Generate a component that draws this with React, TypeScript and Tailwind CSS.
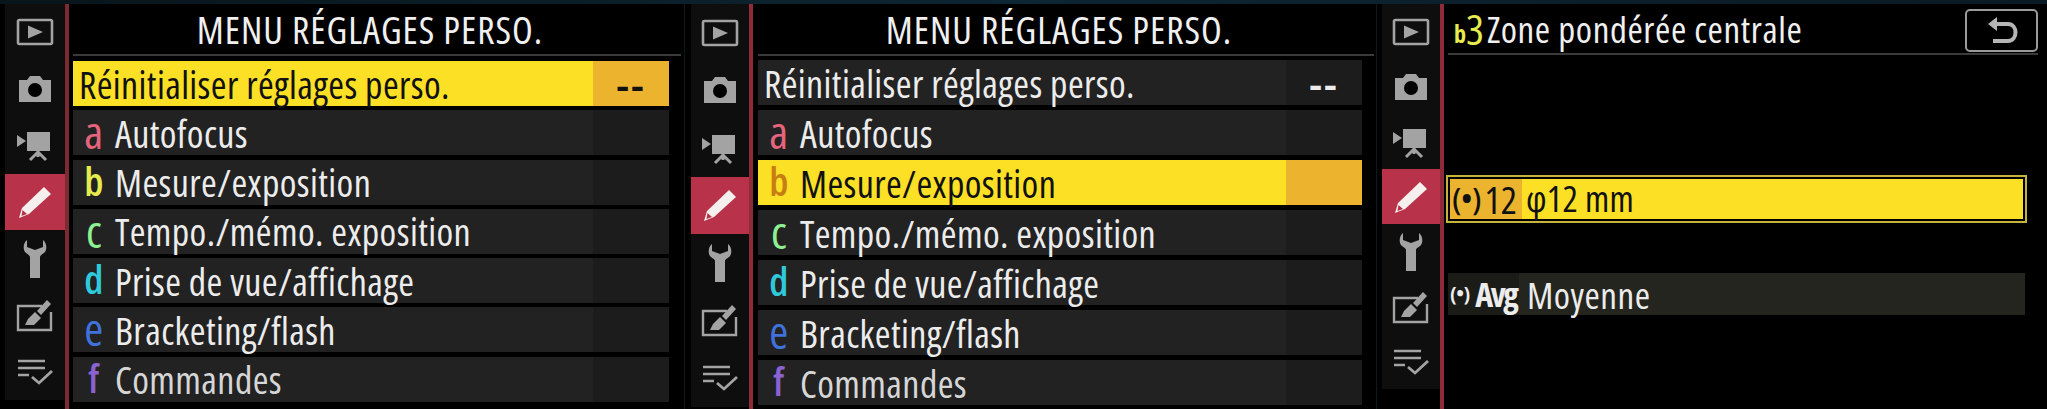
import type { ReactNode } from "react";

const ICON = "#a3a3a3";

// Sidebar glyphs, all drawn on the same 40x40 box
const PlayIcon = () => (
    <svg width="40" height="40" viewBox="0 0 40 40">
        <rect x="3" y="8" width="34" height="24" rx="1.5" fill="none" stroke={ICON} strokeWidth="2.6" />
        <path d="M13 13.5 L28 20 L13 26.5 Z" fill={ICON} />
    </svg>
);

const CameraIcon = () => (
    <svg width="40" height="40" viewBox="0 0 40 40">
        <path d="M4 11 H12 L15 7 H25 L28 11 H36 V33 H4 Z" fill={ICON} />
        <circle cx="20" cy="21" r="7" fill="#000" />
    </svg>
);

const VideoIcon = () => (
    <svg width="40" height="40" viewBox="0 0 40 40">
        <path d="M2 10 L11 16 L2 22 Z" fill={ICON} />
        <rect x="12" y="7" width="23" height="19" fill={ICON} />
        <path d="M23 25 V32 M23 27 L15 35 M23 27 L31 35" stroke={ICON} strokeWidth="3" fill="none" />
    </svg>
);

const PencilIcon = () => (
    <svg width="40" height="40" viewBox="0 0 40 40">
        <path d="M29 5 L36 12 L14 32 L4 36 L7 26 Z" fill="#f5f0ee" />
        <path d="M7.5 28 L12 32 L6.5 34 Z" fill="#b8334a" />
    </svg>
);

const WrenchIcon = () => (
    <svg width="40" height="40" viewBox="0 0 40 40">
        <path d="M12 1 C8 4 8 10 10 13 C11.500 15 15 16 15 18 V39 H25 V18 C25 16 28.500 15 30 13 C32 10 32 4 28 1 V8 L20 11 L12 8 Z" fill={ICON} />
    </svg>
);

const RetouchIcon = () => (
    <svg width="40" height="40" viewBox="0 0 40 40">
        <path d="M27 11 H3 V35 H36 V17" fill="none" stroke={ICON} strokeWidth="2.4" />
        <path d="M13 24 L20 17 L26 23 L19 30 L10 30 Z" fill={ICON} />
        <path d="M22 16 L32 5 L36 9 L26 20 Z" fill={ICON} />
    </svg>
);

const MyMenuIcon = () => (
    <svg width="40" height="40" viewBox="0 0 40 40">
        <path d="M3 9 H30 M3 16 H30 M3 23 H14" stroke={ICON} strokeWidth="2.6" fill="none" />
        <path d="M17 25 L24 31 L37 19" stroke={ICON} strokeWidth="2.8" fill="none" />
    </svg>
);

const BackIcon = () => (
    <svg width="34" height="32" viewBox="0 0 34 32">
        <path d="M3 9 L12 2 V16 Z" fill="#b5b5b5" />
        <path d="M10 9 H23 C33 9 33 26 23 26 H8" fill="none" stroke="#b5b5b5" strokeWidth="4" />
    </svg>
);

const sideIcons = [PlayIcon, CameraIcon, VideoIcon, PencilIcon, WrenchIcon, RetouchIcon, MyMenuIcon];

function Sidebar({ itemClass, className }: { itemClass: string; className: string }) {
    return (
        <div className={`flex flex-col shrink-0 ${className}`}>
            {sideIcons.map((Icon, i) => (
                <div
                    key={i}
                    className={`flex items-center justify-center ${itemClass} ${i === 3 ? "bg-[#b8334a]" : "bg-[#0e0e0e]"}`}
                >
                    <Icon />
                </div>
            ))}
        </div>
    );
}

const TEXT = "font-['Open_Sans','Noto_Sans',sans-serif] [font-stretch:75%] leading-none whitespace-nowrap";

const menuItems = [
    { letter: "a", color: "text-[#e7657c]", size: "text-[46px]", label: "Autofocus" },
    { letter: "b", color: "text-[#e6ec4e]", size: "text-[40px] font-semibold", label: "Mesure/exposition" },
    { letter: "c", color: "text-[#8ef091]", size: "text-[46px]", label: "Tempo./mémo. exposition" },
    { letter: "d", color: "text-[#2fc9dc]", size: "text-[40px] font-semibold", label: "Prise de vue/affichage" },
    { letter: "e", color: "text-[#3f72dc]", size: "text-[46px]", label: "Bracketing/flash" },
    { letter: "f", color: "text-[#8b62d2]", size: "text-[40px] font-semibold", label: "Commandes" },
];

function Row({ active, children, right }: { active: boolean; children: ReactNode; right?: ReactNode }) {
    return (
        <div className={`flex h-[45px] items-center ${active ? "bg-[#fbe026] text-[#111]" : "bg-[#222222] text-[#ececec]"}`}>
            <div className={`flex-1 flex items-center h-full text-[38px] tracking-[0.4px] ${TEXT}`}>{children}</div>
            <div
                className={`w-[76px] h-full flex items-center justify-center text-[44px] font-semibold tracking-[2px] ${TEXT} ${active ? "bg-[#ecb42e]" : "bg-[#1c1c1c]"}`}
            >
                {right}
            </div>
        </div>
    );
}

function MenuList({ selected, gapClass }: { selected: number; gapClass: string }) {
    return (
        <div className={`flex flex-col ${gapClass}`}>
            <Row active={selected === 0} right="--">
                <span className="pl-[6px]">Réinitialiser réglages perso.</span>
            </Row>
            {menuItems.map((item, i) => (
                <Row key={item.letter} active={selected === i + 1}>
                    <span
                        className={`w-[42px] h-[42px] mb-[3px] leading-[42px] text-center ${item.size} ${selected === i + 1 ? "text-[#c87d12]" : item.color}`}
                    >
                        {item.letter}
                    </span>
                    <span className={i === 5 ? "text-[#d6d6d6]" : ""}>{item.label}</span>
                </Row>
            ))}
        </div>
    );
}

function Header({ children }: { children: ReactNode }) {
    return (
        <div className="h-[52px] border-b-2 border-[#3a3a3a] flex items-center justify-center pr-[14px] text-[38px] tracking-[1px] text-[#f0f0f0]">
            <span className={TEXT}>{children}</span>
        </div>
    );
}

export default function App() {
    return (
        <div className="w-[2047px] h-[409px] bg-[#050a0c] overflow-hidden flex flex-col">
            <div className="h-[4px] shrink-0 bg-gradient-to-r from-[#08151b] via-[#0d2633] to-[#0a1a24]" />
            <div className="flex flex-1">
                {/* Left panel */}
                <div className="w-[684px] flex pl-[5px] bg-black">
                    <Sidebar itemClass="h-[56.6px] w-[60px]" className="border-r-4 border-[#7d2a32]" />
                    <div className="ml-[4px] w-[608px]">
                        <Header>MENU RÉGLAGES PERSO.</Header>
                        <div className="w-[596px] mt-[5px]">
                            <MenuList selected={0} gapClass="gap-[4.3px]" />
                        </div>
                    </div>
                </div>

                {/* Middle panel */}
                <div className="w-[692px] flex pl-[6px] border-l border-[#0c1a20] bg-black">
                    <Sidebar itemClass="h-[57.5px] w-[58px]" className="border-r-4 border-[#8f2a3a]" />
                    <div className="ml-[5px] w-[616px]">
                        <Header>MENU RÉGLAGES PERSO.</Header>
                        <div className="w-[604px] mt-[4px]">
                            <MenuList selected={2} gapClass="gap-[5px]" />
                        </div>
                    </div>
                </div>

                {/* Right panel */}
                <div className="w-[671px] flex pl-[5px] border-l border-[#0c1a20] bg-black">
                    <Sidebar itemClass="h-[55px] w-[58px]" className="border-r-4 border-[#8f2a3a]" />
                    <div className="ml-[4px] w-[590px]">
                        <div className="h-[51px] border-b-2 border-[#3a3a3a] flex items-center relative">
                            <span className={`pl-[6px] text-[#e6ec4e] text-[24px] font-bold pt-[10px] ${TEXT}`}>b</span>
                            <span className={`text-[#e6ec4e] text-[42px] pr-[3px] ${TEXT}`}>3</span>
                            <span className={`text-[37px] tracking-[0.6px] text-[#f0f0f0] ${TEXT}`}>Zone pondérée centrale</span>
                            <div className="absolute right-0 top-[5px] w-[73px] h-[43px] border-2 border-[#9a9a9a] rounded-[5px] flex items-center justify-center">
                                <BackIcon />
                            </div>
                        </div>
                        <div className="mt-[120px] -ml-[2px] w-[581px] h-[48px] border-2 border-[#c4b53a] p-[2px] bg-black">
                            <div className="h-full flex items-center bg-[#fbe026] text-[#111] text-[36px]">
                                <span className={`w-[72px] h-full flex items-center pl-[2px] bg-[#ecb42e] text-[38px] ${TEXT}`}>
                                    <span className="text-[30px] font-semibold pr-[3px]">(•)</span>12
                                </span>
                                <span className={`pl-[4px] tracking-[0.3px] ${TEXT}`}>φ12 mm</span>
                            </div>
                        </div>
                        <div className="mt-[50px] w-[577px] h-[42px] flex items-center bg-[#25251f] text-[#ececec] text-[37px]">
                            <span className={`w-[71px] h-full flex items-center pl-[2px] bg-[#1b1b18] font-bold ${TEXT}`}>
                                <span className="text-[20px] pr-[5px]">(•)</span>
                                <span className="text-[34px] tracking-[-2.5px]">Avg</span>
                            </span>
                            <span className={`pl-[8px] tracking-[0.5px] ${TEXT}`}>Moyenne</span>
                        </div>
                    </div>
                </div>
            </div>
        </div>
    );
}
